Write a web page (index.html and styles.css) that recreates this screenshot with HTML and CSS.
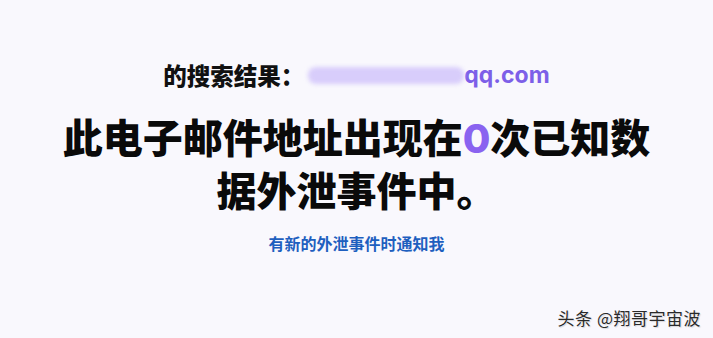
FILE: index.html
```html
<!DOCTYPE html>
<html lang="zh-CN">
<head>
<meta charset="utf-8">
<title>搜索结果</title>
<link rel="stylesheet" href="styles.css">
</head>
<body>
<main class="page">
  <p class="query">的搜索结果：<span class="email"><span class="blur"></span><span class="domain">qq.com</span></span></p>
  <h1 class="title">此电子邮件地址出现在<span class="count">0</span>次已知数<br>据外泄事件中。</h1>
  <a class="notify" href="#">有新的外泄事件时通知我</a>
</main>
<div class="watermark">头条 @翔哥宇宙波</div>
</body>
</html>
```
FILE: styles.css
```css
html, body {
  margin: 0;
  padding: 0;
}
body {
  width: 713px;
  height: 338px;
  background: #f9f8fd;
  font-family: "Noto Sans CJK SC", "Noto Sans", sans-serif;
  position: relative;
  overflow: hidden;
}
.page {
  display: flex;
  flex-direction: column;
  align-items: center;
  padding-top: 59px;
}
.query {
  margin: 0;
  font-size: 23.5px;
  font-weight: 900;
  line-height: 32px;
  color: #111;
  display: flex;
  align-items: center;
}
.email {
  display: inline-flex;
  align-items: center;
}
.blur {
  display: inline-block;
  width: 156px;
  height: 17px;
  border-radius: 8px;
  background: #d8cdfb;
  filter: blur(2px);
  margin-left: 4px;
}
.domain {
  color: #7d5fe8;
  font-family: "Inter", "Noto Sans", sans-serif;
  font-weight: 700;
  font-size: 23px;
}
.title {
  margin: 20px 0 0;
  font-size: 40px;
  font-weight: 900;
  line-height: 51px;
  text-align: center;
  color: #0a0a0a;
}
.count {
  color: #8a63f0;
  font-family: "Inter", "Noto Sans", sans-serif;
  font-weight: 800;
}
.notify {
  margin-top: 17px;
  font-size: 16px;
  font-weight: 700;
  color: #1e5fbf;
  text-decoration: none;
  line-height: 22px;
}
.watermark {
  position: absolute;
  right: 12px;
  bottom: 8px;
  font-size: 17px;
  letter-spacing: 0.5px;
  color: #2a2a2a;
  text-shadow: 0 0 1px #fff, 1px 1px 1px rgba(0,0,0,0.15);
}
```
